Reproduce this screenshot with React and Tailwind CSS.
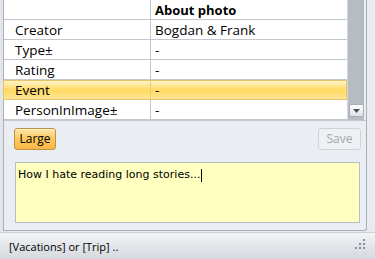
const rows = [
  { label: "Creator", value: "Bogdan & Frank" },
  { label: "Type±", value: "-" },
  { label: "Rating", value: "-" },
  { label: "Event", value: "-", selected: true },
  { label: "PersonInImage±", value: "-" },
];

const font = { fontFamily: '"Open Sans", "Noto Sans", sans-serif' };

export default function App() {
  return (
    <div
      className="w-[375px] h-[259px] bg-[#e4e7eb] flex flex-col overflow-hidden text-[12px] text-black"
      style={font}
    >
      {/* panel */}
      <div className="h-[231px] flex">
        <div className="w-[3px] bg-[#e2e5ea]" />
        <div className="w-[364px] flex flex-col border-l border-r border-b border-[#aab0b8] bg-[#eaedf1] rounded-br-[3px]">
          {/* table + scrollbar */}
          <div className="h-[121px] flex border-b border-[#c4c8ce] text-[13.5px]">
            <div className="w-[343px] bg-white flex flex-col">
              <div className="h-[20px] flex border-b border-[#c4c8ce]">
                <div className="w-[147px] border-r border-[#c4c8ce]" />
                <div className="flex-1 pl-[4px] font-bold text-[13px] leading-[21px]">About photo</div>
              </div>
              {rows.map((row) =>
                row.selected ? (
                  <div
                    key={row.label}
                    className="h-[20px] flex border border-[#e6c56a] bg-gradient-to-b from-[#fff4c8] via-[#ffd95e] to-[#ffe594] -ml-px"
                  >
                    <div className="w-[147px] pl-[11px] leading-[19px] border-r border-[#e8cf7e]">{row.label}</div>
                    <div className="flex-1 pl-[4px] leading-[19px]">{row.value}</div>
                  </div>
                ) : (
                  <div key={row.label} className="h-[20px] flex border-b border-[#c4c8ce]">
                    <div className="w-[147px] pl-[11px] leading-[21px] border-r border-[#c4c8ce]">{row.label}</div>
                    <div className="flex-1 pl-[4px] leading-[21px]">{row.value}</div>
                  </div>
                )
              )}
            </div>
            <div className="w-[17px] bg-[#b6bbc4] border-l border-[#d4d8de] flex flex-col justify-end pb-[3px] items-center">
              <div className="w-[15px] h-[13px] bg-gradient-to-b from-[#fdfdfe] to-[#dfe2e7] border border-[#a9aeb6] rounded-[2px] flex items-center justify-center">
                <svg width="7" height="4" viewBox="0 0 7 4">
                  <path d="M0 0 H7 L3.5 4 Z" fill="#4b5058" />
                </svg>
              </div>
            </div>
          </div>

          {/* buttons */}
          <div className="flex justify-between items-center pl-[10px] pr-[5px] pt-[7px]">
            <button className="w-[42px] h-[22px] rounded-[3px] border border-[#c2933f] bg-gradient-to-b from-[#fde6a6] via-[#fcc75a] to-[#f9b748] text-[12px] leading-none shadow-[inset_0_1px_0_#fff3cf]">
              Large
            </button>
            <button className="w-[43px] h-[22px] rounded-[3px] border border-[#cfd3d9] bg-[#eef0f3] text-[#a3a7ad] text-[12px] leading-none">
              Save
            </button>
          </div>

          {/* note */}
          <div className="pl-[11px] pr-[6px] pt-[12px]">
            <div
              className="h-[61px] bg-[#ffffc0] border border-[#b9bdc4] pl-[2px] pt-[4px]"
              style={{ fontFamily: '"DejaVu Sans", Verdana, sans-serif', fontSize: "11px" }}
            >
              How I hate reading long stories...
              <span className="inline-block w-px h-[13px] bg-black align-middle ml-[1px]" />
            </div>
          </div>
        </div>
        <div className="flex-1 bg-[#e8ebef]" />
      </div>

      {/* status bar */}
      <div className="flex-1 mt-[1px] border-t border-[#cdd1d7] bg-gradient-to-b from-[#f3f5f7] via-[#e2e5e9] to-[#d6dade] flex items-center justify-between pl-[9px] pr-[10px] text-[11px]">
        <span className="leading-none">[Vacations] or [Trip] ..</span>
        <svg width="10" height="10" viewBox="0 0 10 10" className="self-end mb-[10px]">
          {[
            [8, 0],
            [8, 4],
            [4, 4],
            [8, 8],
            [4, 8],
            [0, 8],
          ].map(([x, y]) => (
            <rect key={`${x}-${y}`} x={x} y={y} width="2" height="2" fill="#8a9099" />
          ))}
        </svg>
      </div>
    </div>
  );
}
